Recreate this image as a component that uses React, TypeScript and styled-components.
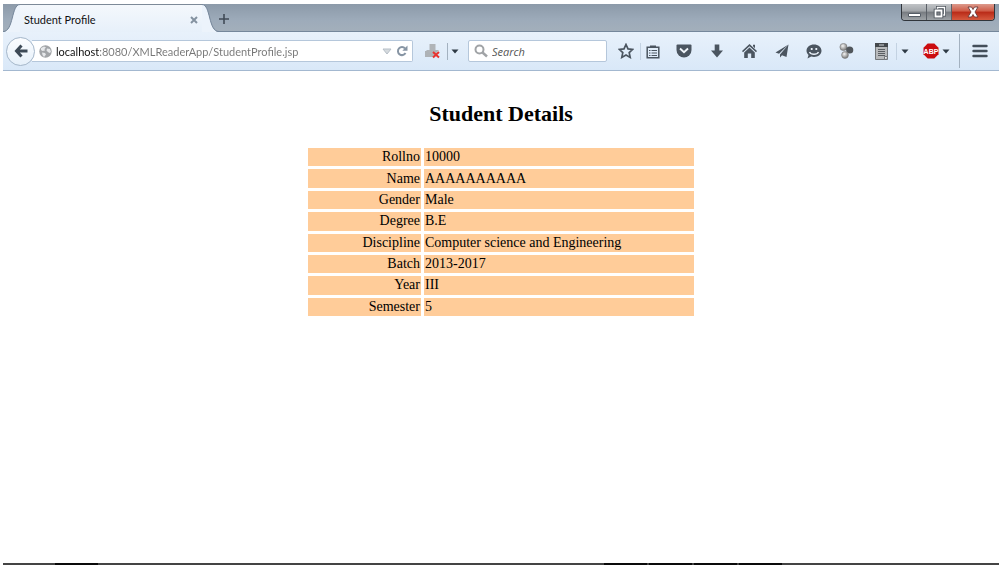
import React from "react";
import styled, { createGlobalStyle, css } from "styled-components";

const GlobalStyle = createGlobalStyle`
  * { box-sizing: border-box; }
  html, body, #root { height: 100%; }
  body { margin: 0; background: #fff; }
`;

const Window = styled.div`
  display: flex;
  flex-direction: column;
  min-height: 100%;
  padding: 4px 4px 5px 3px;
  font-family: Lato, "Open Sans", sans-serif;
`;

const TitleBar = styled.header`
  display: flex;
  align-items: stretch;
  height: 28px;
  background: linear-gradient(to bottom, #8c9aa9, #9dabba 60%, #a3afbb);
  border-bottom: 1px solid #75879b;
`;

const Tab = styled.div`
  display: flex;
  margin-bottom: -1px;
`;

const TabBody = styled.div`
  display: flex;
  align-items: center;
  justify-content: space-between;
  width: 182px;
  padding: 2px 0 0 4px;
  background: linear-gradient(to bottom, #f4f8fc, #e7f0fa);
  border-top: 1px solid #7d8a98;
  font-size: 11px;
  line-height: 16px;
  color: #111;
`;

const plainButton = css`
  display: inline-flex;
  align-items: center;
  justify-content: center;
  padding: 0;
  border: 0;
  background: none;
  color: #4b5560;
`;

const TabClose = styled.button`
  ${plainButton}
  width: 16px;
  height: 16px;
`;

const NewTab = styled.button`
  ${plainButton}
  width: 10px;
  padding-top: 2px;
`;

const WindowControls = styled.div`
  display: flex;
  height: 17px;
  margin: 0 4px 0 auto;
  border: 1px solid #30353b;
  border-top: 0;
  border-radius: 0 0 4px 4px;
  overflow: hidden;
`;

const ControlButton = styled.button<{ $close?: boolean }>`
  ${plainButton}
  width: ${(p) => (p.$close ? "42px" : "25px")};
  border-right: ${(p) => (p.$close ? "0" : "1px solid #5b6067")};
  background: ${(p) =>
    p.$close
      ? "linear-gradient(to bottom, #dc9a8c, #cf5a45 45%, #b92a17 50%, #d65a3f)"
      : "linear-gradient(to bottom, #c0c3c6, #a2a6aa 45%, #777b80 50%, #9ea3a7)"};
`;

const Toolbar = styled.div`
  display: flex;
  align-items: center;
  height: 39px;
  padding-left: 3px;
  background: linear-gradient(to bottom, #e8f1fb, #d9e8f8);
  border-bottom: 1px solid #a3b8d0;
`;

const BackButton = styled.button`
  ${plainButton}
  z-index: 1;
  flex: none;
  width: 29px;
  height: 29px;
  border: 1px solid #a5b7ca;
  border-radius: 50%;
  background: linear-gradient(to bottom, #fbfdff, #e6f0fa);
`;

const AddressBox = styled.form`
  display: flex;
  flex: 1;
  align-items: center;
  min-width: 0;
  height: 22px;
  margin: 0 6px 0 -3px;
  padding: 0 3px 0 7px;
  border: 1px solid #b5c7db;
  border-left: 0;
  border-radius: 0 2px 2px 0;
  background: #fff;
`;

const AddressInput = styled.input`
  flex: 1;
  min-width: 0;
  height: 20px;
  padding: 0 0 0 4px;
  border: 0;
  outline: 0;
  color: #777;
  background: linear-gradient(to right, #111 48px, #777 48px);
  background-clip: text;
  -webkit-text-fill-color: transparent;
  font: 11px/16px Lato, "Open Sans", sans-serif;
`;

const SearchBox = styled.form`
  display: flex;
  flex: none;
  align-items: center;
  width: 139px;
  height: 22px;
  margin: 0 4px 0 6px;
  padding-left: 5px;
  border: 1px solid #b5c7db;
  border-radius: 2px;
  background: #fff;
`;

const SearchInput = styled.input`
  flex: 1;
  min-width: 0;
  height: 20px;
  padding: 0 0 0 4px;
  border: 0;
  outline: 0;
  background: transparent;
  font: italic 11px/16px "Open Sans", "Noto Sans", sans-serif;
  &::placeholder { color: #555; opacity: 1; }
`;

const ToolButton = styled.button<{ $w: number }>`
  ${plainButton}
  flex: none;
  gap: 3px;
  width: ${(p) => p.$w}px;
  height: 24px;
`;

const Separator = styled.span<{ $tall?: boolean; $dark?: boolean; $spaced?: boolean }>`
  flex: none;
  width: 1px;
  height: ${(p) => (p.$tall ? "34px" : "17px")};
  margin-left: ${(p) => (p.$spaced ? "7px" : "0")};
  background: ${(p) => (p.$dark ? "#a3b1c0" : "#c3d2e2")};
`;

const ToolGroup = styled.div`
  display: flex;
  flex: none;
  justify-content: space-between;
  width: 179px;
  margin: 0 18px 0 11px;
`;

const Page = styled.main`
  display: flex;
  flex: 1;
  flex-direction: column;
  align-items: center;
  padding-top: 30px;
  color: #000;
  font-family: "Liberation Serif", "Times New Roman", serif;
`;

const Heading = styled.h2`
  margin: 0 0 18px;
  font-size: 22px;
  line-height: 26px;
`;

const DetailsTable = styled.table`
  width: 392px;
  height: 174px;
  border-collapse: separate;
  border-spacing: 3px;
  table-layout: fixed;
  font-size: 14px;
  line-height: 18px;
`;

const cell = css`
  padding: 0 1px;
  background: #ffcc99;
  font-weight: 400;
`;

const Label = styled.th`
  ${cell}
  width: 113px;
  text-align: right;
`;

const Value = styled.td`
  ${cell}
  text-align: left;
`;

const Taskbar = styled.footer`
  display: flex;
  gap: 2px;
  height: 2px;
  padding-left: 52px;
  background: #444;
`;

const TaskItem = styled.span<{ $push?: boolean }>`
  width: 43px;
  margin-left: ${(p) => (p.$push ? "504px" : "0")};
  background: #0a0a0a;
`;

const Caret = () => (
  <svg width="8" height="5" viewBox="0 0 8 5" fill="#2e3a45"><path d="M.5.5h7L4 4.5z" /></svg>
);

const details = [
  ["Rollno", "10000"],
  ["Name", "AAAAAAAAAA"],
  ["Gender", "Male"],
  ["Degree", "B.E"],
  ["Discipline", "Computer science and Engineering"],
  ["Batch", "2013-2017"],
  ["Year", "III"],
  ["Semester", "5"],
];

const stop = (e: React.FormEvent) => e.preventDefault();

export default function App() {
  return (
    <>
      <GlobalStyle />
      <Window>
        <TitleBar>
          <Tab>
            <svg width="17" height="28" viewBox="0 0 17 28">
              <path d="M0 28C11 28 8 .5 17 .5V28z" fill="#ecf3fb" />
              <path d="M0 27.5C11 27.5 8 .5 17 .5" fill="none" stroke="#75869a" />
            </svg>
            <TabBody>
              <span>Student Profile</span>
              <TabClose aria-label="Close tab">
                <svg width="8" height="8" viewBox="0 0 8 8" stroke="#8492a0" strokeWidth="2"><path d="M1 1l6 6M7 1L1 7" /></svg>
              </TabClose>
            </TabBody>
            <svg width="17" height="28" viewBox="0 0 17 28">
              <path d="M17 28C6 28 9 .5 0 .5V28z" fill="#ecf3fb" />
              <path d="M17 27.5C6 27.5 9 .5 0 .5" fill="none" stroke="#75869a" />
            </svg>
          </Tab>
          <NewTab aria-label="New tab">
            <svg width="10" height="10" viewBox="0 0 10 10" stroke="#414b57" strokeWidth="1.6"><path d="M5 0v10M0 5h10" /></svg>
          </NewTab>
          <WindowControls>
            <ControlButton aria-label="Minimize">
              <svg width="13" height="16" viewBox="0 0 13 16"><path d="M.5 9.5h12v3H.5z" fill="#fff" stroke="#555d66" /></svg>
            </ControlButton>
            <ControlButton aria-label="Restore">
              <svg width="13" height="13" viewBox="0 0 13 13" fill="none">
                <path d="M4.500 3V1.500H11.500V9H9.500" stroke="#4e555d" strokeWidth="3" />
                <path d="M4.500 3V1.500H11.500V9H9.500" stroke="#fff" strokeWidth="1.400" />
                <path d="M2.500 4.500h6v6h-6z" stroke="#4e555d" strokeWidth="3.600" />
                <path d="M2.500 4.500h6v6h-6z" stroke="#fff" strokeWidth="1.800" />
              </svg>
            </ControlButton>
            <ControlButton $close aria-label="Close">
              <svg width="14" height="12" viewBox="0 0 14 12"><path d="M2 1h3.500L7 3.500 8.500 1H12L9 6l3 5H8.500L7 8.500 5.500 11H2l3-5z" fill="#fff" stroke="#6b3b3b" strokeWidth=".9" /></svg>
            </ControlButton>
          </WindowControls>
        </TitleBar>

        <Toolbar>
          <BackButton aria-label="Back">
            <svg width="14" height="14" viewBox="0 0 14 14" fill="none" stroke="#3d4a57" strokeWidth="3"><path d="M7.500 1.500L2.500 7l5 5.500M3 7h10.500" /></svg>
          </BackButton>
          <AddressBox onSubmit={stop}>
            <svg width="13" height="13" viewBox="0 0 13 13">
              <circle cx="6.500" cy="6.500" r="6.200" fill="#a2a5a8" />
              <path d="M2 3l3-1.500 2 1L5.500 4 6 5.500 3.500 6 2 5zM8 3.500l3 .5 1 3-1.500 1L9 7 7.500 5.500zM3 7.500l3 .5 1 1.500-2 2.500L3.500 10z" fill="#e6e8ea" />
            </svg>
            <AddressInput aria-label="Address" defaultValue="localhost:8080/XMLReaderApp/StudentProfile.jsp" />
            <ToolButton $w={16} type="button" aria-label="Show history">
              <svg width="10" height="7" viewBox="0 0 10 7"><path d="M1 1h8L5 6z" fill="#d5dade" stroke="#b7bfc7" /></svg>
            </ToolButton>
            <ToolButton $w={14} type="button" aria-label="Reload">
              <svg width="12" height="12" viewBox="0 0 12 12"><path d="M9 3.500A4 4 0 1 0 9.500 8" fill="none" stroke="#8795a4" strokeWidth="2" /><path d="M11.500.5v5.200H6.300z" fill="#8795a4" /></svg>
            </ToolButton>
          </AddressBox>
          <ToolButton $w={28} aria-label="Download blocked">
            <svg width="16" height="16" viewBox="0 0 16 16">
              <path d="M4.500 1h6v6H14L7.500 14 1 7h3.500z" fill="#b0b4b8" />
              <path d="M0 8h3l4.500 4.500L10 10v4H0z" fill="#aeb2b6" />
              <path d="M8 9l6 5.500M14 9l-6 5.500" stroke="#e8332f" strokeWidth="2" />
            </svg>
          </ToolButton>
          <Separator $dark />
          <ToolButton $w={14} aria-label="Download options"><Caret /></ToolButton>
          <SearchBox onSubmit={stop}>
            <svg width="14" height="14" viewBox="0 0 14 14" fill="none" stroke="#a0a3a6" strokeWidth="2"><circle cx="5.500" cy="5.500" r="4" /><path d="M8.500 8.500l4.500 4" strokeWidth="2.500" /></svg>
            <SearchInput aria-label="Search" placeholder="Search" />
          </SearchBox>
          <ToolButton $w={29} aria-label="Bookmark">
            <svg width="16" height="16" viewBox="0 0 16 16"><path d="M8 1.500l2 4.400 4.700.5-3.500 3.200 1 4.800L8 12l-4.200 2.400 1-4.800L1.300 6.400 6 5.900z" fill="none" stroke="#4b5560" strokeWidth="1.700" /></svg>
          </ToolButton>
          <Separator />
          <ToolButton $w={24} aria-label="Bookmarks list">
            <svg width="14" height="15" viewBox="0 0 14 15">
              <path d="M1.200 3.200h11.600v10.600H1.200z" fill="none" stroke="#4b5560" strokeWidth="1.500" />
              <path d="M4 1.500h6v2.500H4z" fill="#4b5560" />
              <path d="M3 6.500h1.500M5.500 6.500H11M3 9h1.500M5.500 9H11M3 11.500h1.500M5.500 11.500H11" stroke="#4b5560" strokeWidth="1.200" />
            </svg>
          </ToolButton>
          <ToolGroup>
            <ToolButton $w={16} aria-label="Pocket">
              <svg width="16" height="14" viewBox="0 0 16 14"><path d="M1.500.5h13q1 0 1 1V6a7.500 7.500 0 0 1-15 0V1.500q0-1 1-1z" fill="#4b5560" /><path d="M4 4.500l4 3.700 4-3.700" fill="none" stroke="#f0f5fa" strokeWidth="1.900" /></svg>
            </ToolButton>
            <ToolButton $w={16} aria-label="Downloads">
              <svg width="14" height="14" viewBox="0 0 14 14"><path d="M4.700.5h4.600V6.500H13L7 13.500 1 6.500h3.700z" fill="#4b5560" /></svg>
            </ToolButton>
            <ToolButton $w={16} aria-label="Home">
              <svg width="15" height="14" viewBox="0 0 15 14" fill="#4b5560"><path d="M7.500 0L15 7l-1 1.200L7.500 2.300 1 8.200 0 7z" /><path d="M7.500 3.600L12.800 8.400V14H9.200V9.500H5.800V14H2.200V8.400zM11 .8h2v3.500l-2-2z" /></svg>
            </ToolButton>
            <ToolButton $w={16} aria-label="Share">
              <svg width="14" height="14" viewBox="0 0 14 14" fill="#4b5560"><path d="M13.500.5L.5 8.500l3.500 1.300zM13.500.5L5 10.500v3l2-2.300 4.500 1.800z" /></svg>
            </ToolButton>
            <ToolButton $w={16} aria-label="Chat">
              <svg width="16" height="15" viewBox="0 0 16 15"><path d="M8 .5c4.200 0 7.500 2.700 7.500 6.300S12.200 13 8 13c-1 0-2-.2-2.800-.5L1.500 14.500l1-3.500C1.300 9.800.5 8.400.5 6.800.5 3.200 3.800.5 8 .5z" fill="#4b5560" /><path d="M4.800 4h1.800v2H4.800zM9.400 4h1.800v2H9.400z" fill="#e9f1f9" /><path d="M3.500 8c1.500 3 7.500 3 9 0" fill="none" stroke="#e9f1f9" strokeWidth="1.400" /></svg>
            </ToolButton>
            <ToolButton $w={16} aria-label="Extension">
              <svg width="15" height="16" viewBox="0 0 15 16">
                <defs><radialGradient id="ball" cx=".4" cy=".35" r=".65"><stop stopColor="#f5f5f5" /><stop offset="1" stopColor="#777" /></radialGradient></defs>
                <circle cx="4.500" cy="4" r="3.600" fill="url(#ball)" stroke="#777" strokeWidth=".6" />
                <circle cx="10.700" cy="7" r="3.600" fill="#51565b" />
                <circle cx="6" cy="12" r="3.400" fill="url(#ball)" stroke="#777" strokeWidth=".6" />
              </svg>
            </ToolButton>
          </ToolGroup>
          <ToolButton $w={16} aria-label="Document">
            <svg width="13" height="17" viewBox="0 0 13 17"><path d="M.5.5h12v16H.5z" fill="#b7b9bb" stroke="#73777b" /><path d="M0 0h13v4H0z" fill="#44484c" /><path d="M4 1h5v2H4z" fill="#8a8e92" /><path d="M3 6.500h7M3 8.500h7M3 10.500h7M3 12.500h7" stroke="#5a5e62" /><path d="M9.500 16.500v-3h3" fill="#eee" stroke="#73777b" /></svg>
          </ToolButton>
          <Separator $spaced />
          <ToolButton $w={16} aria-label="Document options"><Caret /></ToolButton>
          <ToolButton $w={46} aria-label="Adblock options">
            <svg width="16" height="16" viewBox="0 0 16 16"><path d="M4.700.5h6.600l4.200 4.200v6.600l-4.200 4.200H4.700L.5 11.300V4.700z" fill="#cb0c10" /><text x="8" y="10.500" textAnchor="middle" fill="#fff" fontFamily="Liberation Sans, sans-serif" fontWeight="700" fontSize="7">ABP</text></svg>
            <Caret />
          </ToolButton>
          <Separator $tall $dark />
          <ToolButton $w={39} aria-label="Menu">
            <svg width="16" height="14" viewBox="0 0 16 14" stroke="#434e5a" strokeWidth="2.400" strokeLinecap="round"><path d="M1.500 2h13M1.500 7h13M1.500 12h13" /></svg>
          </ToolButton>
        </Toolbar>

        <Page>
          <Heading>Student Details</Heading>
          <DetailsTable>
            <tbody>
              {details.map(([label, value]) => (
                <tr key={label}>
                  <Label scope="row">{label}</Label>
                  <Value>{value}</Value>
                </tr>
              ))}
            </tbody>
          </DetailsTable>
        </Page>
        <Taskbar>
          <TaskItem />
          <TaskItem $push />
          <TaskItem />
          <TaskItem />
          <TaskItem />
        </Taskbar>
      </Window>
    </>
  );
}
